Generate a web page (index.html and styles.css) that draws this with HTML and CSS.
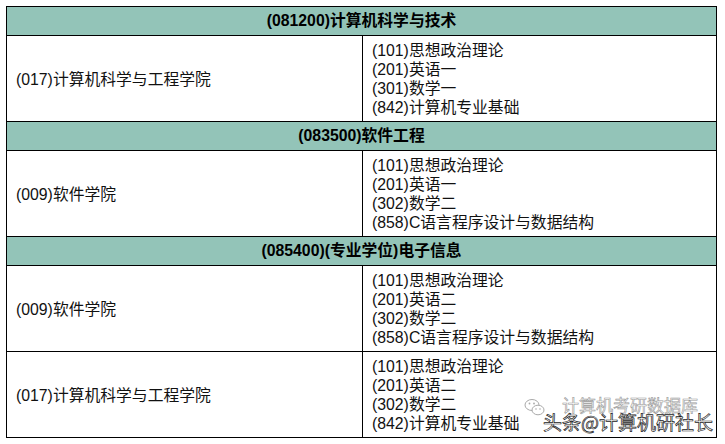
FILE: index.html
```html
<!DOCTYPE html>
<html lang="zh">
<head>
<meta charset="utf-8">
<link rel="stylesheet" href="styles.css">
</head>
<body>
<div class="wrap">
<table class="plan">
  <colgroup><col class="c1"><col class="c2"></colgroup>
  <tr class="head"><td colspan="2">(081200)计算机科学与技术</td></tr>
  <tr class="row">
    <td class="dept">(017)计算机科学与工程学院</td>
    <td class="subj">(101)思想政治理论<br>(201)英语一<br>(301)数学一<br>(842)计算机专业基础</td>
  </tr>
  <tr class="head"><td colspan="2">(083500)软件工程</td></tr>
  <tr class="row">
    <td class="dept">(009)软件学院</td>
    <td class="subj">(101)思想政治理论<br>(201)英语一<br>(302)数学二<br>(858)C语言程序设计与数据结构</td>
  </tr>
  <tr class="head"><td colspan="2">(085400)(专业学位)电子信息</td></tr>
  <tr class="row">
    <td class="dept">(009)软件学院</td>
    <td class="subj">(101)思想政治理论<br>(201)英语二<br>(302)数学二<br>(858)C语言程序设计与数据结构</td>
  </tr>
  <tr class="row">
    <td class="dept">(017)计算机科学与工程学院</td>
    <td class="subj">(101)思想政治理论<br>(201)英语二<br>(302)数学二<br>(842)计算机专业基础</td>
  </tr>
</table>
<div class="mark">
  <svg class="wx" width="22" height="20" viewBox="0 0 22 20">
    <ellipse cx="8" cy="7" rx="7" ry="5.5" fill="none" stroke="#aaa" stroke-width="1"/>
    <ellipse cx="14" cy="12" rx="6" ry="4.8" fill="#fff" stroke="#aaa" stroke-width="1"/>
    <circle cx="5.5" cy="5.5" r="0.9" fill="#aaa"/>
    <circle cx="10" cy="5.5" r="0.9" fill="#aaa"/>
    <circle cx="12" cy="11" r="0.8" fill="#aaa"/>
    <circle cx="16" cy="11" r="0.8" fill="#aaa"/>
  </svg>
  <span class="src">计算机考研数据库</span>
  <span class="tt">头条@计算机研社长</span>
</div>
</div>
</body>
</html>
```
FILE: styles.css
```css
html, body {
  margin: 0;
  padding: 0;
  background: #fff;
}
.wrap {
  position: relative;
  width: 725px;
  height: 444px;
  padding: 6px 0 0 6px;
  box-sizing: border-box;
}
.plan {
  border-collapse: collapse;
  width: 710px;
  table-layout: fixed;
  font-family: "Liberation Sans", "Noto Sans CJK SC", sans-serif;
  font-size: 15.8px;
  color: #111;
}
.c1 { width: 356px; }
.c2 { width: 354px; }
.plan td {
  border: 1px solid #000;
  padding: 0;
}
.head td {
  background: #93c4b8;
  text-align: center;
  font-weight: bold;
  height: 28px;
  line-height: 28px;
  color: #000;
}
.row td {
  height: 85px;
  vertical-align: middle;
}
.dept {
  padding-left: 9px !important;
}
.subj {
  padding-left: 9px !important;
  line-height: 19px;
}
.mark {
  position: absolute;
  left: 524px;
  top: 394px;
  width: 200px;
  height: 44px;
}
.wx {
  position: absolute;
  left: 0;
  top: 4px;
}
.src {
  position: absolute;
  left: 38px;
  top: 0;
  font-family: "Noto Sans CJK SC", sans-serif;
  font-size: 17px;
  line-height: 22px;
  color: #fff;
  -webkit-text-stroke: 0.6px #999;
  white-space: nowrap;
}
.tt {
  position: absolute;
  left: 19px;
  top: 16px;
  font-family: "Noto Sans CJK SC", sans-serif;
  font-size: 19px;
  line-height: 24px;
  color: #fff;
  -webkit-text-stroke: 0.7px #222;
  white-space: nowrap;
}
```
